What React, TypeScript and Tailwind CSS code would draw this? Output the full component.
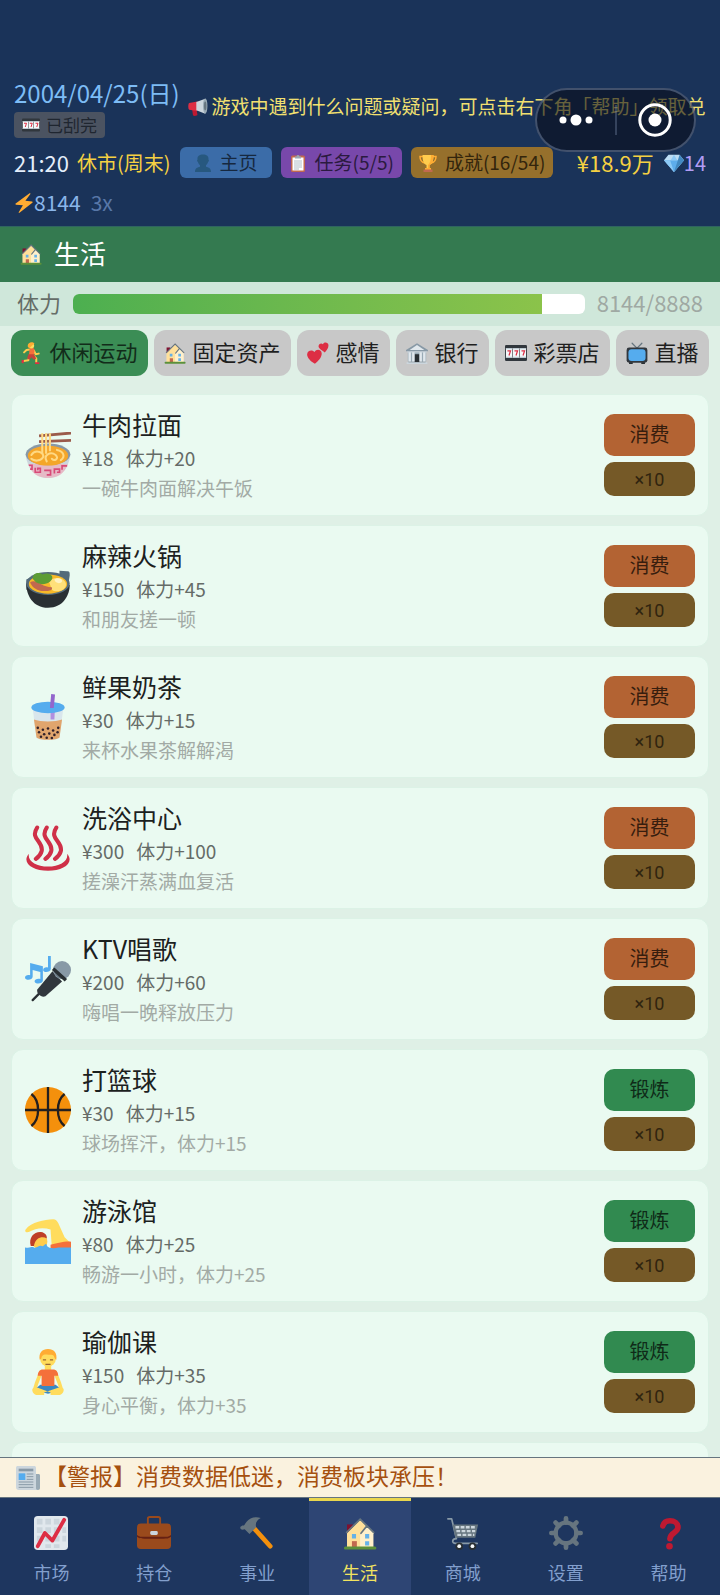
import React from "react";

type IconName = keyof typeof drawings;

const drawings = {
  house: (
    <g transform="translate(2.5 1.500) scale(.87 .93)">
      <path fill="#7f1230" d="M2 8h7v9H2z" />
      <path fill="#ffe8b6" d="M2 18 18 3l16 15v16H2z" />
      <path fill="#ffd983" d="M2 18 18 3l7 7-7 8v16H2z" opacity=".55" />
      <path fill="#fff3d4" d="M18 18.500 26 10l8 8V34H18z" opacity=".7" />
      <path fill="none" stroke="#66757f" strokeWidth="2" strokeLinecap="round" d="m19 18 7-8M1.500 17 18 2l16.500 15" />
      <path fill="#55acee" d="M8 19h5v5H8zM24 19h5v5h-5zM24 27h5v5h-5z" opacity=".9" />
      <path fill="#c1694f" d="M8 27h6v7H8z" />
      <path fill="#5c913b" d="M0 33h36a1 1 0 0 1 0 3.500H0A1 1 0 0 1 0 33z" />
    </g>
  ),
  slots: (
    <>
      <rect width="36" height="26" y="5" rx="2" fill="#31373d" />
      <path fill="#f5f8fa" d="M1.500 10H12v16H1.500zM13 10h10v16H13zM24 10h10.500v16H24z" />
      <path fill="#bdc9d1" d="M1.500 10H12v2H1.500zM13 10h10v2H13zM24 10h10.500v2H24zM1.500 24H12v2H1.500zM13 24h10v2H13zM24 24h10.500v2H24z" />
      <path fill="none" stroke="#dd2e44" strokeWidth="2" d="M4 14.500h5L6.500 22M15.500 14.500h5L18 22M27 14.500h5L29.500 22" />
    </>
  ),
  megaphone: (
    <>
      <path fill="#be1931" d="M7 20h8l2 12c0 2-7 3-8 1z" />
      <path fill="#dd2e44" d="M2 11 17 8v17L2 23c-2-2-2-10 0-12z" />
      <path fill="#ccd6dd" d="M15 9 31 3c4 6 4 20 0 27l-16-6z" />
      <ellipse cx="31" cy="16" rx="4" ry="13.500" fill="#99aab5" />
      <ellipse cx="31" cy="16" rx="2.200" ry="8" fill="#66757f" />
    </>
  ),
  bust: (
    <path fill="#27587f" d="M24 25.500v-3c2-1.500 3.500-4 4-6.500 2-.5 2.500-4.500.8-5C30 4 25 1 18 1S6 4 7.200 11c-1.700.5-1.200 4.500.8 5 .5 2.500 2 5 4 6.500v3C6 27 2 29 2 36h32c0-7-4-9-10-10.500z" />
  ),
  clipboard: (
    <>
      <rect x="4" y="3" width="28" height="33" rx="3" fill="#c1694f" />
      <path fill="#fff" d="M7 7h22v26H7z" />
      <path fill="#99aab5" d="M12 9V5h3a3 3 0 0 1 6 0h3v4z" />
      <path stroke="#99aab5" strokeWidth="1.500" d="M10 14h16M10 18h16M10 22h16M10 26h16M10 30h10" />
    </>
  ),
  trophy: (
    <>
      <path fill="none" stroke="#ffac33" strokeWidth="3" d="M8 5H2c0 8 4 12 10 13M28 5h6c0 8-4 12-10 13" />
      <path fill="#ffcc4d" d="M7 2h22c0 11-2 18-8 20v7h-6v-7C9 20 7 13 7 2z" />
      <path fill="#ffac33" d="M24 2h5c0 11-2 18-8 20v7h-3v-7c4-3 6-10 6-20zM12 28h12v4H12z" />
      <path fill="#c1694f" d="M9 31h18v5H9z" />
    </>
  ),
  gem: (
    <>
      <path fill="#bdddf4" d="M8 3h20l8 10-18 21L0 13z" />
      <path fill="#5dadec" d="M0 13h36L18 34z" />
      <path fill="#8ccaf7" d="m12 13 6-10 6 10z" />
      <path fill="#4289c1" d="m25 13-7 21 18-21zM28 3l8 10H25z" />
      <path fill="#8ccaf7" d="M0 13h11l7 21z" />
    </>
  ),
  zap: <path fill="#ffac33" d="M28 .5 3 19c-1 .8-.7 1.800.5 2L16 22 8.500 34.500c-.6 1.200.4 1.900 1.400 1.200L33 17.500c1-.8.7-1.800-.5-2L20.500 14 29.500 2c.8-1.200-.4-2.300-1.500-1.500z" />,
  runner: (
    <>
      <path fill="none" stroke="#ffcc4d" strokeWidth="3.200" strokeLinecap="round" strokeLinejoin="round" d="m17 12-8 1-4 4M21 14l3 6 5-1M14 22l-2 8-8 1M20 22l5 5v6" />
      <path fill="#f4703b" d="M14 11c4-3 9-1 8 4l-1 7c-3 1-6 1-8 0z" />
      <path fill="#c6433a" d="M12 20h9l4 7-4 2-4-4-3 4-4-2z" />
      <circle cx="17" cy="6" r="4.500" fill="#ffdc5d" />
      <path fill="#ffac33" d="M11 6c0-5 8-8 11-3l-3 2-4 4c-2 1-4 0-4-3z" />
      <path fill="#dd2e44" d="m1 29 4 1-1 5-3-1zM23 33h7v3h-7z" />
    </>
  ),
  hearts: (
    <>
      <path fill="#dd2e44" d="M35 6.500c1-6-7-7.500-9-3-4-3-9.500 2-6 6.500 2 3 6 5 9 7 3-3 6-7 6-10.500z" />
      <path fill="#dd2e44" d="M24 20c1-8-9-9.500-11.500-3.500C8 11-1.500 14.500.5 22.500 2 28 8 33 13 35.500c5-4 10.500-9.500 11-15.500z" />
    </>
  ),
  bank: (
    <>
      <path fill="#66757f" d="M4 32h28v3H4z" />
      <path fill="#99aab5" d="M3 16h30v16H3z" />
      <path fill="#292f33" d="M14 20h8v13h-8z" />
      <path fill="#e1e8ed" d="M4 16h4v16H4zM10 16h4v16h-4zM22 16h4v16h-4zM28 16h4v16h-4z" />
      <path fill="#ccd6dd" d="M1 33h34v3H1zM2 14h32v3H2z" />
      <path fill="#8899a6" d="M18 2 0 13v2h36v-2z" />
      <path fill="#e1e8ed" d="M18 5 6 13h24z" />
    </>
  ),
  tv: (
    <>
      <path stroke="#66757f" strokeWidth="2" strokeLinecap="round" d="m10 2 8 8 8-8" />
      <rect x="1" y="9" width="34" height="25" rx="4" fill="#31373d" />
      <path fill="#292f33" d="M5 33h6v3H5zM25 33h6v3h-6z" />
      <path fill="#55acee" d="M9 12h18c3 0 5 2 5 5v9c0 3-2 5-5 5H9c-3 0-5-2-5-5v-9c0-3 2-5 5-5z" />
    </>
  ),
  ramen: (
    <>
      <path fill="#ccd6dd" d="M.5 18C2 28 7 36 18 36s16-8 17.500-18z" />
      <path fill="#f4abba" d="M2.500 25C5 32 10 36 18 36s13-4 15.500-11z" opacity=".65" />
      <ellipse cx="18" cy="17.500" rx="17.500" ry="8.500" fill="#8899a6" />
      <ellipse cx="18" cy="18.500" rx="15.800" ry="7.800" fill="#f4a62a" />
      <path fill="none" stroke="#ffd983" strokeWidth="1.600" strokeLinecap="round" d="M5 18c3-5 11-2 9 2-2 3-7 3-9 1M17 23c-3-5 3-8 7-5 3 3-1 5-3 3M25 14c5 1 7 5 3 8" />
      <path fill="none" stroke="#d84a78" strokeWidth="1.300" d="M3 26h2.500v3H4M8 28v3.500h4v-3h-2v1.500M15 30h5v3.500h-3M23 32.500V29h4v2.500h-2M29 29.500v-3h4" />
      <path stroke="#9b5b4b" strokeWidth="2.200" d="M11 3 36 .8M11 7.500 36 6.500" />
      <path fill="none" stroke="#ffd983" strokeWidth="1.600" d="M13.500 1v16M16.500 1v16M19.500 1v14" />
    </>
  ),
  hotpot: (
    <>
      <path fill="#546b7a" d="m27 6 6 .5c2 0 2 1 2 3l-1 7-7 2zM1 13l4-2v10H1z" />
      <path fill="#292f33" d="M1 16c0 9 5 19 17 19s17-10 17-18z" />
      <ellipse cx="18" cy="16" rx="17" ry="9" fill="#546b7a" />
      <ellipse cx="18" cy="16.500" rx="15" ry="7.500" fill="#f7b928" />
      <path fill="#ffe07a" d="M19 15c2-5 12-4 13 1s-7 8-11 5z" />
      <path fill="#fff3c4" d="M23 13c2-2 6-1 6 1s-5 3-6-1z" />
      <path fill="#c1694f" d="M4 15c5-3 9 4 17 4 1 3-3 3-8 3-5-1-8-4-9-7z" />
      <path fill="#5c9c35" d="M6 12c0-5 6-5 8-3 3-2 9 0 7 4-3 5-12 5-15-1z" />
    </>
  ),
  boba: (
    <>
      <path fill="#d9e6ec" d="M6 11h24l-3 23c-2 3-16 3-18 0z" />
      <path fill="#e0a56d" d="M7 20c5 2 17 2 22 0l-2 14c-3 2.500-15 2.500-18 0z" />
      <path fill="#b08fe0" d="M20 8h3.500l-.5 12h-3z" />
      <ellipse cx="18" cy="10.500" rx="13" ry="4.500" fill="#55acee" />
      <path fill="#9266cc" d="m20.500 0 3 .3L22.500 11h-3z" />
      <g fill="#31212a">
        <circle cx="10" cy="26.500" r="1" /><circle cx="14" cy="28" r="1" /><circle cx="18" cy="27" r="1" />
        <circle cx="22" cy="28.500" r="1" /><circle cx="26" cy="26.500" r="1" /><circle cx="11" cy="30" r="1" />
        <circle cx="15" cy="31.500" r="1" /><circle cx="19" cy="31" r="1" /><circle cx="23" cy="32" r="1" />
        <circle cx="25.500" cy="30" r="1" /><circle cx="12.500" cy="33.500" r="1" /><circle cx="17" cy="34.300" r="1" />
        <circle cx="21" cy="34.500" r="1" />
      </g>
    </>
  ),
  springs: (
    <>
      <path fill="none" stroke="#cf3048" strokeWidth="3.200" strokeLinecap="round" d="M9.500 2C3.500 11 15 13 13 20.500c-.6 2.500-2.500 4.500-4.500 6M17 2c-6 9 5.500 11 3.500 18.500-.6 2.500-2.500 4.500-4.500 6M24.500 2c-6 9 5.500 11 3.500 18.500-.6 2.500-2.500 4.500-4.500 6" />
      <path fill="#cf3048" d="M3 22.500c-1 6 6 10 15 10s16-4 15-10c6 7-3 13.300-15 13.300S-3 29.500 3 22.500z" />
    </>
  ),
  ktv: (
    <>
      <path fill="#55acee" d="M4 5.500 14 8v11c0 3-6 3.500-6.500 1 0-2 2.500-2.500 4.500-2v-5.500L6 11v5c0 3-5.500 3.500-6 1 0-2 2-2.500 4-2zM18 0h2.200v10c0 3-6 3.500-6 1 0-2 2-2.500 3.800-2z" />
      <path stroke="#292f33" strokeWidth="1.800" strokeLinecap="round" d="m6 34.500 6-6" />
      <path fill="#31373d" d="m21.500 12 7.500 8-13 11.500c-3 1.500-7-2-6.500-5z" />
      <circle cx="29" cy="11" r="7" fill="#8899a6" />
      <path fill="#66757f" d="M22.500 9 32 17.500c-5 2-10-3-9.500-8.500z" />
      <path stroke="#292f33" strokeWidth="2.800" d="m22 10 10 9" />
    </>
  ),
  basketball: (
    <>
      <circle cx="18" cy="18" r="18" fill="#f4900c" />
      <path fill="none" stroke="#231f20" strokeWidth="1.800" d="M18 0v36M0 18h36M5 5.500C12 11 12 25 5 30.500M31 5.500C24 11 24 25 31 30.500" />
    </>
  ),
  swim: (
    <>
      <path fill="#ffdc5d" d="M.5 9C5 3 15 1.500 22 1c2 0 3 1 4 3l5 11 4 4v4H21l-1-14C14 7 8 8 3 11c-2 .5-3.500-.5-2.500-2z" />
      <path fill="#f4703b" d="M20 21c4-1 11-3 16-2.500V25H20z" />
      <circle cx="11.500" cy="18.500" r="6" fill="#ffcc4d" />
      <path fill="#be3f28" d="M4.500 22c-2-7 3-11.500 8-11 3.500.5 5 3 4.500 5-3-2-9-1-10 6z" />
      <path fill="#55acee" d="M0 23c4 1 5-1 7 0s4-2 6-1 3-3 4-1c0 3 6 3 9 2h10v13H0z" />
    </>
  ),
  yoga: (
    <>
      <path fill="none" stroke="#ffdc5d" strokeWidth="2.800" strokeLinecap="round" strokeLinejoin="round" d="M12.500 18 9 27l-1.500 5M23.500 18l3.500 9 1.500 5" />
      <path fill="#3b88c3" d="M12 28h12l5 4-11 3-11-3z" />
      <path fill="#ffdc5d" d="m6 31 3-1 11 4v2H9c-2 0-4-3-3-5zM30 31l-3-1-12 4v2h12c2 0 4-3 3-5zM15.500 12h5v5h-5z" />
      <path fill="#f4703b" d="M14 16h8c2.500 0 4 2 4 5h-3v8H13v-8h-3c0-3 1.500-5 4-5z" />
      <circle cx="18" cy="7.500" r="6.200" fill="#ffdc5d" />
      <path fill="#ffac33" d="M11.500 8.500C10.500 3 13.500 0 18 0s7.500 3 6.500 8.500c-2-1-1-4-4-4-3.500 0-5.500-1-7 1-1 1 0 2-2 3z" />
      <path fill="none" stroke="#963" d="M14 8.500h2.500M19.500 8.500H22M16 12h4" />
    </>
  ),
  newspaper: (
    <>
      <path fill="#99aab5" d="M27 12h7c1 0 2 1 2 2v19c0 2-1 3-3 3h-6z" />
      <path fill="#ccd6dd" d="M0 3c0-2 1-3 3-3h24c2 0 3 1 3 3v30c0 2 1 3 3 3H4c-2 0-4-1-4-4z" />
      <path fill="#8899a6" d="M4 4h22v4H4z" />
      <path fill="#55acee" d="M4 11h10v10H4z" />
      <path stroke="#8899a6" strokeWidth="1.500" d="M16 12h10M16 16h10M16 20h10M4 24h22M4 28h22M4 32h22" />
    </>
  ),
  chart: (
    <>
      <rect width="36" height="36" rx="4" fill="#e1e8ed" />
      <path fill="#ccd6dd" d="M3 3h6v6H3zM12 3h6v6h-6zM21 3h6v6h-6zM3 12h6v6H3zM12 12h6v6h-6zM21 12h6v6h-6zM3 21h6v6H3zM12 21h6v6h-6zM21 21h6v6h-6zM12 30h6v4h-6zM21 30h6v4h-6zM30 12h4v6h-4zM30 21h4v6h-4z" />
      <path fill="none" stroke="#dd2e44" strokeWidth="4" strokeLinecap="round" strokeLinejoin="round" d="M4 32 11.500 18l8 8L32 4" />
    </>
  ),
  briefcase: (
    <>
      <path fill="none" stroke="#9a4a1c" strokeWidth="2" d="M11.500 9V3c0-1 1-2 2-2h9c1 0 2 1 2 2v6" />
      <rect y="8" width="36" height="27" rx="4" fill="#9a4a1c" />
      <path fill="#662113" d="M0 20c2 2 5 2 8 2h20c3 0 6 0 8-2v2c-2 2-5 2-8 2H8c-3 0-6 0-8-2z" />
      <rect x="14" y="16" width="8" height="4" rx="1.500" fill="#ccd6dd" />
    </>
  ),
  hammer: (
    <>
      <path stroke="#f4900c" strokeWidth="5" strokeLinecap="round" d="M14 12 32 32" />
      <path fill="#66757f" d="M1 14c2 1 3 0 4 0l5 5 7-7c-1-5 1-8 5-10-6-2-12 0-15 4-2 2-2 4-3 4s-2 0-3 1c-1 0-1 2 0 3z" />
    </>
  ),
  cart: (
    <>
      <path fill="none" stroke="#8899a6" strokeWidth="1.800" strokeLinecap="round" strokeLinejoin="round" d="M2 3h4l5 21M11 24c-5 0-5 5-1 5h23" />
      <path fill="#66757f" d="M7 9h27l-3 14H10z" />
      <path stroke="#ccd6dd" strokeWidth="2.600" strokeDasharray="4 1.500" d="M10 12h22M11 16h20M12 20h18" />
      <circle cx="14" cy="32" r="4" fill="#292f33" /><circle cx="28" cy="32" r="4" fill="#292f33" />
      <circle cx="14" cy="32" r="2" fill="#f5f8fa" /><circle cx="28" cy="32" r="2" fill="#f5f8fa" />
    </>
  ),
  gear: (
    <g stroke="#66757f" fill="none">
      <circle cx="18" cy="18" r="11" strokeWidth="4.500" />
      <path strokeWidth="5" strokeLinecap="round" d="M18 2.500V7M18 29v4.500M2.500 18H7M29 18h4.500M7 7l3.500 3.500M25.500 25.500 29 29M29 7l-3.500 3.500M10.500 25.500 7 29" />
    </g>
  ),
  question: (
    <>
      <path fill="none" stroke="#be1931" strokeWidth="6" strokeLinecap="round" strokeLinejoin="round" d="M11.500 10.500C12.500 6.500 15.500 5 19 5c4.500 0 8.500 2.500 8.500 7 0 6-8 5-8.500 12" />
      <circle cx="18.500" cy="32" r="3.500" fill="#be1931" />
    </>
  ),
};

function Icon({ name, className }: { name: IconName; className: string }) {
  return (
    <svg viewBox="0 0 36 36" fill="none" aria-hidden="true" className={`shrink-0 ${className}`}>
      {drawings[name]}
    </svg>
  );
}

type Activity = { icon: IconName; name: string; price: number; gain: number; note: string; train?: boolean };

const activities: Activity[] = [
  { icon: "ramen", name: "牛肉拉面", price: 18, gain: 20, note: "一碗牛肉面解决午饭" },
  { icon: "hotpot", name: "麻辣火锅", price: 150, gain: 45, note: "和朋友搓一顿" },
  { icon: "boba", name: "鲜果奶茶", price: 30, gain: 15, note: "来杯水果茶解解渴" },
  { icon: "springs", name: "洗浴中心", price: 300, gain: 100, note: "搓澡汗蒸满血复活" },
  { icon: "ktv", name: "KTV唱歌", price: 200, gain: 60, note: "嗨唱一晚释放压力" },
  { icon: "basketball", name: "打篮球", price: 30, gain: 15, note: "球场挥汗，体力+15", train: true },
  { icon: "swim", name: "游泳馆", price: 80, gain: 25, note: "畅游一小时，体力+25", train: true },
  { icon: "yoga", name: "瑜伽课", price: 150, gain: 35, note: "身心平衡，体力+35", train: true },
];

const tabs: { icon: IconName; label: string }[] = [
  { icon: "runner", label: "休闲运动" },
  { icon: "house", label: "固定资产" },
  { icon: "hearts", label: "感情" },
  { icon: "bank", label: "银行" },
  { icon: "slots", label: "彩票店" },
  { icon: "tv", label: "直播" },
];

const navItems: { icon: IconName; label: string }[] = [
  { icon: "chart", label: "市场" },
  { icon: "briefcase", label: "持仓" },
  { icon: "hammer", label: "事业" },
  { icon: "house", label: "生活" },
  { icon: "cart", label: "商城" },
  { icon: "gear", label: "设置" },
  { icon: "question", label: "帮助" },
];

const chipClass = "flex h-[31px] items-center gap-2 rounded-md text-[19px] whitespace-nowrap";

function Header() {
  return (
    <header className="relative bg-[#1a3359] px-3.5 pt-[79px] pb-2">
      <div className="flex items-center gap-2">
        <div className="shrink-0">
          <p className="text-[24px] leading-7 text-[#7dbcf5]">2004/04/25(日)</p>
          <button className="mt-[5px] flex h-[26px] items-center gap-1.5 rounded bg-[#4b5361] px-2 text-[17px] text-[#1f2630]">
            <Icon name="slots" className="size-[18px]" />
            已刮完
          </button>
        </div>
        <div className="flex min-w-0 flex-1 items-center gap-1 overflow-hidden pb-1 text-[19px] whitespace-nowrap text-[#f2e070]">
          <Icon name="megaphone" className="size-5" />
          游戏中遇到什么问题或疑问，可点击右下角「帮助」领取兑换
        </div>
      </div>
      <div className="mt-2 flex items-center">
        <span className="text-[22px] text-[#e4eefb]">21:20</span>
        <span className="ml-2 text-[20px] text-[#f5d142]">休市(周末)</span>
        <button className={`${chipClass} ml-[9px] bg-[#3b6ca8] px-3.5 text-[#16283f]`}>
          <Icon name="bust" className="size-[18px]" />
          主页
        </button>
        <button className={`${chipClass} ml-[9px] bg-[#7848ab] px-2 text-[#2b1a40]`}>
          <Icon name="clipboard" className="size-[18px]" />
          任务(5/5)
        </button>
        <button className={`${chipClass} ml-[9px] bg-[#96702c] px-2 text-[#33250c]`}>
          <Icon name="trophy" className="size-[18px]" />
          成就(16/54)
        </button>
        <span className="ml-auto text-[22px] whitespace-nowrap text-[#f5d142]">¥18.9万</span>
        <span className="ml-2.5 flex items-center text-[20px] text-[#b39df5]">
          <Icon name="gem" className="size-5" />
          14
        </span>
      </div>
      <div className="mt-2 flex h-[31px] items-center text-[21px]">
        <Icon name="zap" className="size-5" />
        <span className="text-[#8ab6ea]">8144</span>
        <span className="ml-2.5 text-[#5877a8]">3x</span>
      </div>
      <div className="absolute top-[88px] right-6 flex h-16 w-[161px] items-center rounded-full border-2 border-[#8fa3c4]/40 bg-[#080b19]/60">
        <button aria-label="更多" className="flex flex-1 justify-center">
          <svg viewBox="0 0 36 12" className="h-3 w-9" fill="#fff">
            <circle cx="5" cy="6" r="3.500" />
            <circle cx="18" cy="6" r="5.500" />
            <circle cx="31" cy="6" r="3.500" />
          </svg>
        </button>
        <span className="h-[30px] w-0.5 bg-[#8fa3c4]/30" />
        <button aria-label="关闭" className="flex flex-1 justify-center">
          <svg viewBox="0 0 34 34" className="size-[34px]" fill="#fff">
            <circle cx="17" cy="17" r="15.200" fill="none" stroke="#fff" strokeWidth="3" />
            <circle cx="17" cy="17" r="6.500" />
          </svg>
        </button>
      </div>
    </header>
  );
}

function ActivityCard({ item }: { item: Activity }) {
  return (
    <li className="flex h-[122px] shrink-0 items-center gap-[11px] rounded-xl border border-[#dcf2e6] bg-[#eafaf1] px-[13px]">
      <Icon name={item.icon} className="size-[46px]" />
      <div className="min-w-0 flex-1 pb-0.5">
        <h2 className="text-[25px] leading-9 text-[#1c211e]">{item.name}</h2>
        <p className="flex gap-3 text-[19px] leading-8 text-[#656b67]">
          <span>¥{item.price}</span>
          <span>体力+{item.gain}</span>
        </p>
        <p className="text-[19px] leading-7 text-[#a2aaa5]">{item.note}</p>
      </div>
      <div className="flex w-[91px] flex-col gap-1.5">
        <button className={item.train ? "h-[42px] rounded-[10px] bg-[#318a50] pb-0.5 text-[20px] text-[#0f2a18]" : "h-[42px] rounded-[10px] bg-[#b36333] pb-0.5 text-[20px] text-[#361d0e]"}>
          {item.train ? "锻炼" : "消费"}
        </button>
        <button className="h-[34px] rounded-[10px] bg-[#755927] font-[Roboto,sans-serif] text-[18px] text-[#30240f]">×10</button>
      </div>
    </li>
  );
}

export default function App() {
  const stamina = 8144;
  const maxStamina = 8888;
  return (
    <div className="flex h-screen flex-col overflow-hidden bg-[#dff0e6] font-['Noto_Sans_CJK_SC',sans-serif]">
      <Header />
      <h1 className="flex h-14 shrink-0 items-center gap-3 border-t border-[#2f6560] bg-[#347a50] px-5 pb-0.5 text-[26px] text-white">
        <Icon name="house" className="size-[22px]" />
        <span className="pb-0.5">生活</span>
      </h1>
      <div className="flex h-11 shrink-0 items-center gap-3 bg-[#cfe7da] px-[17px] text-[22px]">
        <span className="pb-1 text-[#656d67]">体力</span>
        <div className="h-5 flex-1 overflow-hidden rounded-md bg-white">
          <div
            className="h-full bg-linear-to-r from-[#4caf50] to-[#8bc34a]"
            style={{ width: `${(stamina / maxStamina) * 100}%` }}
          />
        </div>
        <span className="pb-1 text-[#9fa9a3]">{stamina}/{maxStamina}</span>
      </div>
      <div className="flex shrink-0 gap-1.5 px-[11px] pt-1 pb-2">
        {tabs.map((tab, i) => (
          <button
            key={tab.label}
            className={
              i === 0
                ? "flex h-[46px] flex-auto items-center justify-center gap-1.5 rounded-xl bg-[#3b8d55] text-[22px] whitespace-nowrap text-[#122c1a]"
                : "flex h-[46px] flex-auto items-center justify-center gap-1.5 rounded-xl bg-[#c8c8c8] text-[22px] whitespace-nowrap text-[#1f1f1f]"
            }
          >
            <Icon name={tab.icon} className="size-[22px]" />
            <span className="pb-1">{tab.label}</span>
          </button>
        ))}
      </div>
      <main className="min-h-0 flex-1 overflow-y-auto px-[11px] pt-2.5 [scrollbar-width:none]">
        <ul className="flex flex-col gap-[9px]">
          {activities.map((item) => (
            <ActivityCard key={item.name} item={item} />
          ))}
          <li className="h-[122px] shrink-0 rounded-xl border border-[#dcf2e6] bg-[#eafaf1]" />
        </ul>
      </main>
      <div className="flex h-[41px] shrink-0 items-center gap-1 border-y border-[#66757f] bg-[#faf2df] px-4 text-[23px] text-[#a5500f]">
        <Icon name="newspaper" className="size-6" />
        <span className="pb-1">【警报】消费数据低迷，消费板块承压！</span>
      </div>
      <nav className="flex h-[97px] shrink-0 bg-[#1e365f] text-[18px]">
        {navItems.map((item) => {
          const active = item.label === "生活";
          return (
            <a
              key={item.label}
              href="#"
              className={
                active
                  ? "flex flex-1 flex-col items-center gap-2 border-t-[3px] border-[#ead64e] bg-[#2e4574] pt-[15px] leading-7 text-[#f2e35f]"
                  : "flex flex-1 flex-col items-center gap-2 border-t-[3px] border-transparent pt-[15px] leading-7 text-[#829fcd]"
              }
            >
              <Icon name={item.icon} className="size-[34px]" />
              {item.label}
            </a>
          );
        })}
      </nav>
    </div>
  );
}
